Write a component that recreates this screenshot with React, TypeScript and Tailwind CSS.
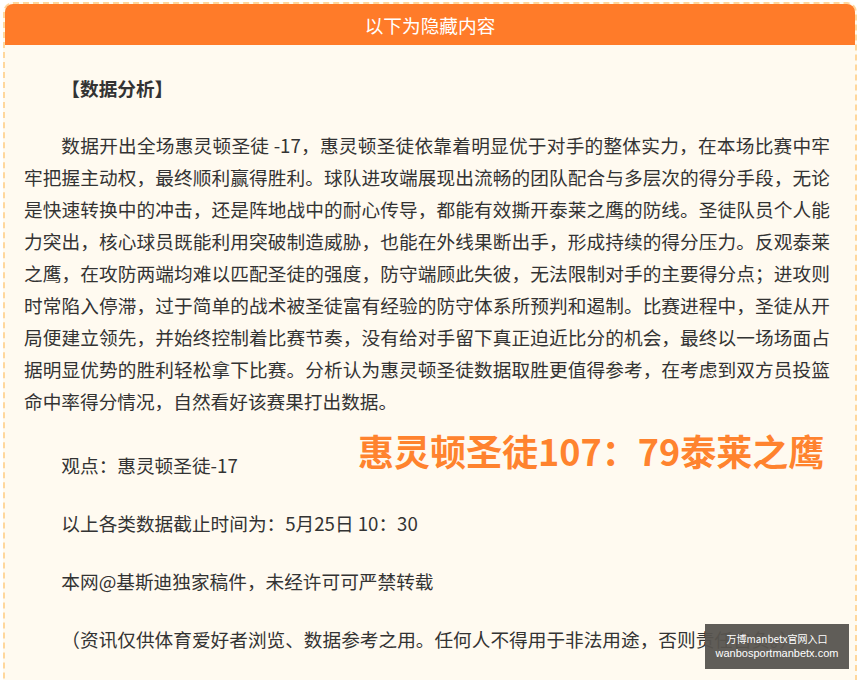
const body =
  "数据开出全场惠灵顿圣徒 -17，惠灵顿圣徒依靠着明显优于对手的整体实力，在本场比赛中牢牢把握主动权，最终顺利赢得胜利。球队进攻端展现出流畅的团队配合与多层次的得分手段，无论是快速转换中的冲击，还是阵地战中的耐心传导，都能有效撕开泰莱之鹰的防线。圣徒队员个人能力突出，核心球员既能利用突破制造威胁，也能在外线果断出手，形成持续的得分压力。反观泰莱之鹰，在攻防两端均难以匹配圣徒的强度，防守端顾此失彼，无法限制对手的主要得分点；进攻则时常陷入停滞，过于简单的战术被圣徒富有经验的防守体系所预判和遏制。比赛进程中，圣徒从开局便建立领先，并始终控制着比赛节奏，没有给对手留下真正迫近比分的机会，最终以一场场面占据明显优势的胜利轻松拿下比赛。分析认为惠灵顿圣徒数据取胜更值得参考，在考虑到双方员投篮命中率得分情况，自然看好该赛果打出数据。";

export default function App() {
  return (
    <div
      className="relative h-[680px] overflow-hidden bg-white pt-[2px] px-[3px]"
      style={{ fontFamily: '"Microsoft YaHei", "Noto Sans CJK SC", "Noto Sans", sans-serif' }}
    >
      <div className="h-[700px] rounded-t-[10px] border-2 border-dashed border-[#ffd79c] bg-[#fffaf0]">
        <div className="h-[41px] rounded-t-[8px] bg-[#ff7b29] text-center text-[18.67px] leading-[41px] text-white">
          以下为隐藏内容
        </div>

        <div className="pl-[19px] pr-[25px] pt-[27px] text-[18.67px] leading-[32px] text-[#333]">
          <p className="indent-[2em] font-bold">【数据分析】</p>
          <p className="mt-[25px] indent-[2em] text-justify">{body}</p>

          <div className="mt-[22px] flex items-baseline">
            <span className="w-[334px] shrink-0 pl-[2em]">观点：惠灵顿圣徒-17</span>
            <span className="-translate-y-[7px] text-[36px] font-bold leading-none text-[#ff832e]">
              惠灵顿圣徒107：79泰莱之鹰
            </span>
          </div>

          <p className="mt-[26px] indent-[2em]">以上各类数据截止时间为：5月25日 10：30</p>
          <p className="mt-[26px] indent-[2em]">本网@基斯迪独家稿件，未经许可可严禁转载</p>
          <p className="mt-[26px] indent-[2em]">
            （资讯仅供体育爱好者浏览、数据参考之用。任何人不得用于非法用途，否则责任自负。）
          </p>
        </div>
      </div>

      <div className="absolute left-[705px] top-[624px] flex h-[45px] w-[144px] flex-col items-center justify-center bg-[#57544f]/95 text-white">
        <span className="text-[10px] leading-[14px]">万博manbetx官网入口</span>
        <span className="text-[11px] leading-[15px]" style={{ fontFamily: '"Liberation Sans", Arial, sans-serif' }}>
          wanbosportmanbetx.com
        </span>
      </div>
    </div>
  );
}
